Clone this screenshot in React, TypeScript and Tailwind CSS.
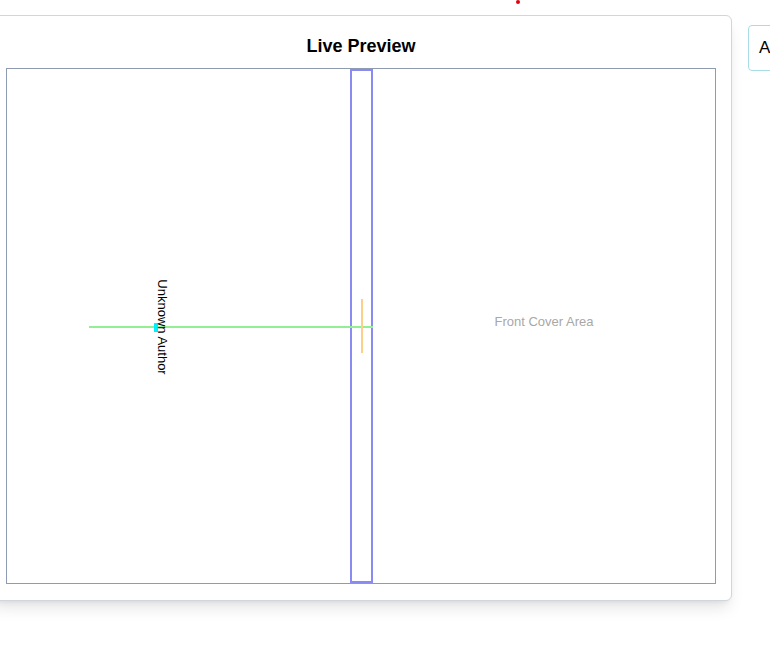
export default function App() {
  return (
    <div className="relative min-h-screen bg-white overflow-hidden font-['Liberation_Sans',Arial,sans-serif]">
      {/* stray marker */}
      <div className="absolute left-[516px] top-0 w-[4px] h-[4px] rounded-full bg-red-600" />

      <div className="flex items-start gap-4 pt-[15px] -ml-[10px]">
        {/* Preview card */}
        <div className="w-[742px] shrink-0 bg-white border border-gray-300 rounded-md shadow-lg px-[15px] pt-4 pb-4">
          <h2 className="text-lg leading-7 font-bold text-black text-center mb-[8px]">Live Preview</h2>

          <div className="relative h-[516px] border border-[#8f9bb0] bg-white">
            {/* spine */}
            <div className="absolute left-[343px] top-0 w-[23px] h-full border-2 border-[#8a8af5]" />

            {/* guide lines */}
            <div className="absolute left-[82px] top-[257px] w-[284px] h-[2px] bg-[#93ef93]" />
            <div className="absolute left-[354px] top-[230px] w-[2px] h-[54px] bg-[#fcd08a]" />
            <div className="absolute left-[147px] top-[254px] w-[4px] h-[9px] bg-[#00f0ff]" />

            {/* back cover author */}
            <div className="absolute left-[155px] top-[258px] -translate-x-1/2 -translate-y-1/2 rotate-90 whitespace-nowrap text-[13px] text-black">
              Unknown Author
            </div>

            {/* front cover */}
            <div className="absolute left-[366px] right-0 top-[243px] text-center text-[13px] text-[#a8a8a8]">
              Front Cover Area
            </div>
          </div>
        </div>

        {/* side panel */}
        <div className="mt-[10px] w-[60px] h-[46px] shrink-0 border border-[#a8dde6] rounded-sm flex items-center px-[10px] text-[17px] text-black">
          A
        </div>
      </div>
    </div>
  )
}
